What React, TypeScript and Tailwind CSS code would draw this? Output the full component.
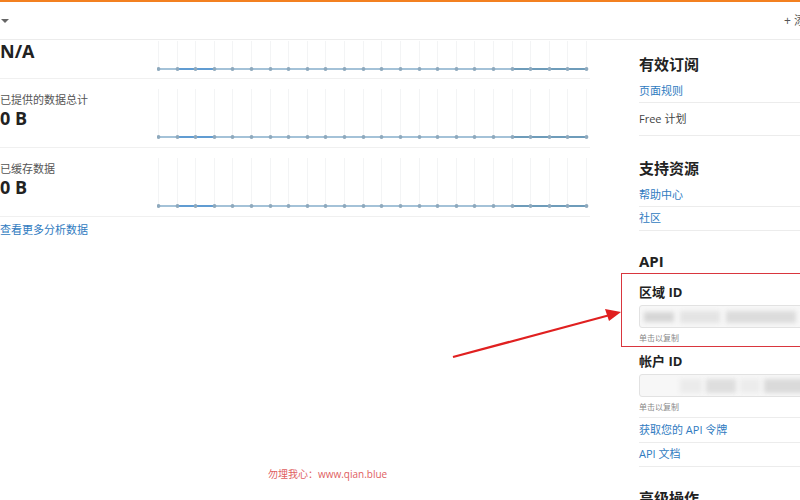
import React from 'react';

const FONT = { fontFamily: '"Open Sans", "Noto Sans CJK SC", sans-serif' };

const Spark: React.FC<{ height: number }> = ({ height }) => {
  const pts = Array.from({ length: 24 }, (_, i) => Math.round(1 + (i * 428) / 23) + 0.5);
  const y = height - 2;
  return (
    <svg width="432" height={height} className="block">
      {pts.map((x) => (
        <line key={x} x1={x} y1={0} x2={x} y2={y} stroke="#f3f4f5" strokeWidth="1" />
      ))}
      <line x1={pts[0]} y1={y} x2={pts[23]} y2={y} stroke="#86aecb" strokeWidth="1.4" />
      <line x1={pts[1]} y1={y} x2={pts[3]} y2={y} stroke="#4a8fd1" strokeWidth="1.4" />
      <line x1={pts[19]} y1={y} x2={pts[23]} y2={y} stroke="#5d8fb0" strokeWidth="1.4" />
      {pts.map((x) => (
        <circle key={x} cx={x} cy={y} r="1.9" fill="#8ea9bd" />
      ))}
    </svg>
  );
};

const Metric: React.FC<{ label?: string; value: string; first?: boolean }> = ({ label, value, first }) => (
  <div className={`flex border-b border-[#f0f0f0] ${first ? 'h-[39px]' : 'h-[69px]'}`}>
    <div className={`w-[157px] shrink-0 ${first ? 'pt-0' : 'pt-[14px]'}`}>
      {label && <div className="text-[11px] leading-[14px] text-[#555]">{label}</div>}
      <div className="text-[18px] font-bold leading-[22px] text-[#222]">{value}</div>
    </div>
    <div className={first ? 'pt-[1px]' : 'pt-[10px]'}>
      <Spark height={first ? 30 : 50} />
    </div>
  </div>
);

const Heading: React.FC<{ children: React.ReactNode; className?: string }> = ({ children, className }) => (
  <div className={`text-[15px] font-bold leading-[20px] text-[#222] ${className ?? ''}`}>{children}</div>
);

const Row: React.FC<{ children: React.ReactNode; h: string; link?: boolean }> = ({ children, h, link }) => (
  <div className={`flex items-center border-b border-[#ececec] text-[11px] ${h} ${link ? 'text-[#2f7bbf]' : 'text-[#444]'}`}>
    {children}
  </div>
);

const IdBox: React.FC<{ label: string; variant: number }> = ({ label, variant }) => (
  <div>
    <div className="text-[13px] font-bold leading-[18px] text-[#222]">{label}</div>
    <div className="relative mt-[4px] h-[23px] overflow-hidden rounded-[3px] border border-[#e2e2e2] bg-[#f7f7f7]">
      {variant === 0 ? (
        <div className="flex h-full items-center gap-[6px] pl-[4px] blur-[2px]">
          <div className="h-[10px] w-[30px] bg-[#d6d6d6]" />
          <div className="h-[12px] w-[40px] bg-[#e4e4e4]" />
          <div className="h-[12px] w-[70px] bg-[#dcdcdc]" />
        </div>
      ) : (
        <div className="flex h-full items-center gap-[4px] pl-[40px] blur-[2px]">
          <div className="h-[14px] w-[22px] bg-[#ebebeb]" />
          <div className="h-[14px] w-[30px] bg-[#dedede]" />
          <div className="h-[14px] w-[20px] bg-[#ececec]" />
          <div className="h-[14px] w-[50px] bg-[#dadada]" />
        </div>
      )}
    </div>
    <div className="mt-[4px] text-[8px] leading-[12px] text-[#888]">单击以复制</div>
  </div>
);

const App: React.FC = () => {
  return (
    <div className="relative h-[500px] w-[800px] overflow-hidden bg-white" style={FONT}>
      <div className="h-[2px] bg-[#f38020]" />
      <div className="flex h-[38px] items-center justify-between border-b border-[#ececec]">
        <div className="ml-[1px] h-0 w-0 border-x-[4px] border-t-[4px] border-x-transparent border-t-[#666]" />
        <div className="mr-[-42px] whitespace-nowrap text-[12px] text-[#555]">+ 添加站点</div>
      </div>

      <div className="flex">
        <div className="w-[590px] shrink-0">
          <Metric value="N/A" first />
          <Metric label="已提供的数据总计" value="0 B" />
          <Metric label="已缓存数据" value="0 B" />
          <div className="mt-[5px] text-[11px] text-[#2f7bbf]">查看更多分析数据</div>
        </div>

        <div className="ml-[49px] w-[200px] shrink-0 pt-[14px]">
          <Heading>有效订阅</Heading>
          <Row h="h-[29px] pt-[6px]" link>页面规则</Row>
          <Row h="h-[33px]">Free 计划</Row>

          <Heading className="mt-[22px]">支持资源</Heading>
          <Row h="h-[29px] pt-[6px]" link>帮助中心</Row>
          <Row h="h-[24px]" link>社区</Row>

          <Heading className="mt-[20px]">API</Heading>
          <div className="mt-[12px]">
            <IdBox label="区域 ID" variant={0} />
          </div>
          <div className="mt-[8px] border-b border-[#ececec] pb-[4px]">
            <IdBox label="帐户 ID" variant={1} />
          </div>
          <Row h="h-[25px]" link>获取您的 API 令牌</Row>
          <Row h="h-[24px]" link>API 文档</Row>

          <Heading className="mt-[21px]">高级操作</Heading>
        </div>
      </div>

      {/* annotation overlay */}
      <div className="absolute left-[621px] top-[273px] h-[74px] w-[200px] border border-[#d9363e]" />
      <svg className="absolute left-0 top-0" width="800" height="500">
        <line x1="453" y1="357" x2="610" y2="315" stroke="#e02020" strokeWidth="2.2" />
        <polygon points="621,312 605,309 609,321" fill="#e02020" />
      </svg>
      <div className="absolute left-[268px] top-[467px] text-[10px] text-[#e0605f]">勿埋我心：www.qian.blue</div>
    </div>
  );
};

export default App;
